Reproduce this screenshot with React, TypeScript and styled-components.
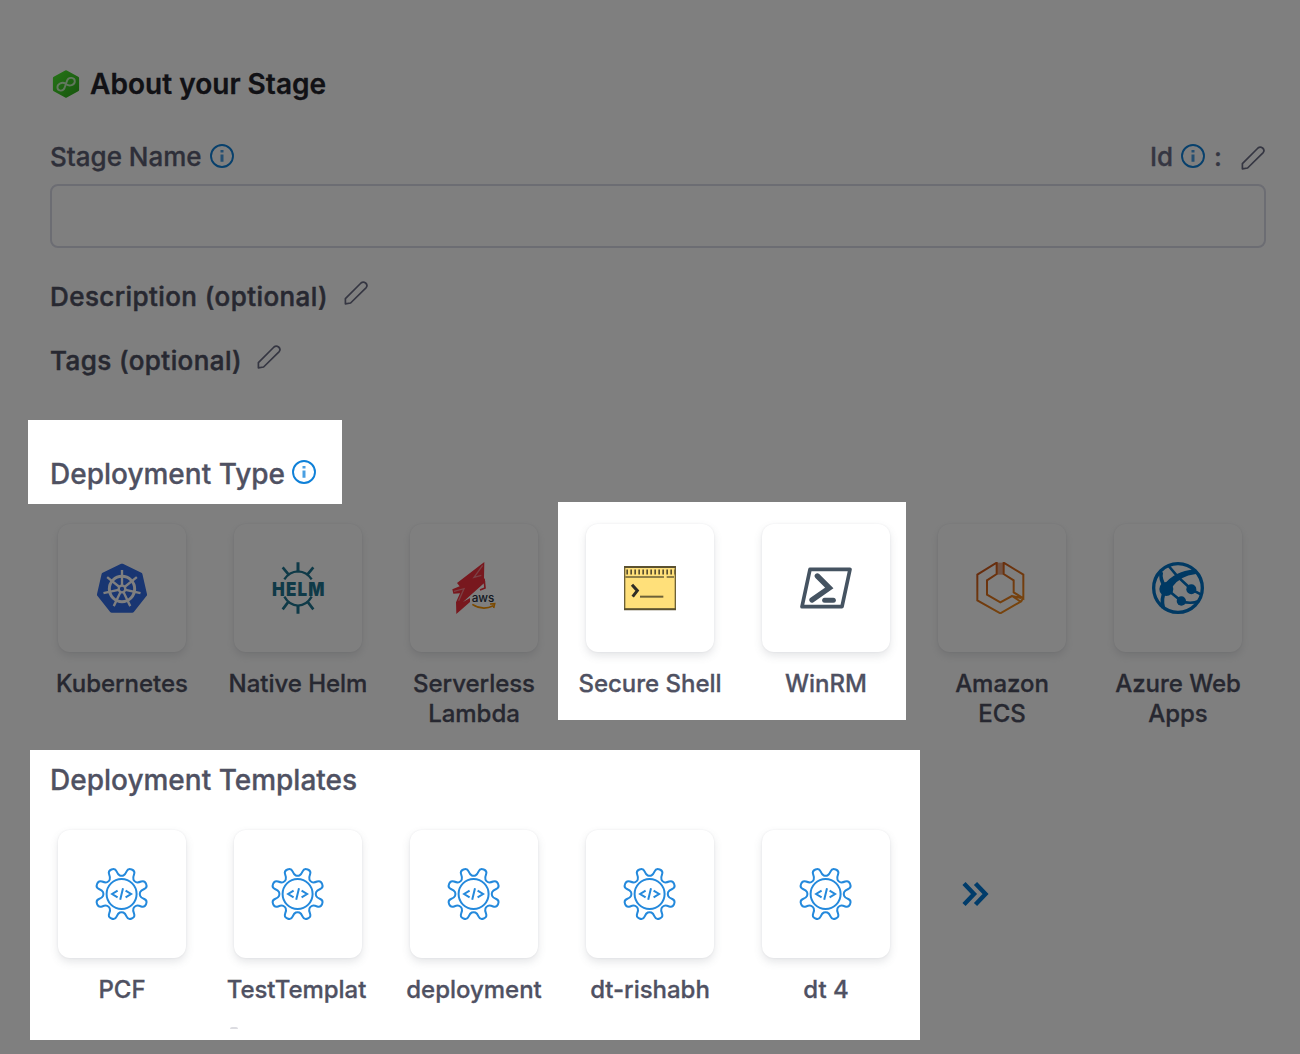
import React from "react";
import styled, { createGlobalStyle } from "styled-components";

const GlobalStyle = createGlobalStyle`
  html, body { margin: 0; padding: 0; background: #fff; }
  * { box-sizing: border-box; }
`;

const Page = styled.main`
  position: relative;
  width: 1300px;
  height: 1054px;
  padding: 64px 34px 0 50px;
  overflow: hidden;
  background: #fff;
  font-family: Inter, "Liberation Sans", sans-serif;
  color: #4f5162;
  -webkit-text-stroke: 0.3px currentColor;
`;

/* Dimming layer with the highlighted regions punched out. */
const Spotlight = styled.div`
  position: absolute;
  inset: 0;
  background: rgba(0, 0, 0, 0.5);
  pointer-events: none;
  clip-path: path(evenodd, "M0 0H1300V1054H0Z M28 420H342V504H28Z M558 502H906V720H558Z M30 750H920V1040H30Z");
`;

const Row = styled.div<{ $gap?: number; $mt?: number; $pl?: number }>`
  display: flex;
  align-items: center;
  height: 40px;
  gap: ${(p) => p.$gap ?? 8}px;
  margin-top: ${(p) => p.$mt ?? 0}px;
  padding-left: ${(p) => p.$pl ?? 0}px;
`;

const Title = styled.h1`
  margin: 0;
  font-size: 28px;
  font-weight: 600;
  letter-spacing: 0.03px;
  line-height: 40px;
  color: #22222a;
  white-space: nowrap;
`;

const Label = styled.span<{ $tone?: string; $size?: number; $spacing?: number }>`
  font-size: ${(p) => p.$size ?? 26}px;
  font-weight: 500;
  letter-spacing: ${(p) => p.$spacing ?? 0}px;
  line-height: 40px;
  color: ${(p) => p.$tone ?? "#4f5162"};
  white-space: nowrap;
`;

/* Optional fields carry a slightly heavier label. */
const StrongLabel = styled(Label)`
  -webkit-text-stroke-width: 0.5px;
`;

const IconSlot = styled.span<{ $lift?: number; $ml?: number; $mr?: number }>`
  display: flex;
  margin: 0 ${(p) => p.$mr ?? 0}px ${(p) => p.$lift ?? 0}px ${(p) => p.$ml ?? 0}px;
`;

const Split = styled.div`
  display: flex;
  justify-content: space-between;
  margin-top: 33px;
`;

const Input = styled.input`
  display: block;
  width: 1216px;
  height: 64px;
  margin-top: 7px;
  border: 2px solid #d9dae6;
  border-radius: 8px;
  background: #fff;
  outline: none;
`;

const Grid = styled.div`
  display: flex;
  margin: 30px 0 0 -16px;
  height: 206px;
`;

const Item = styled.div`
  display: flex;
  flex-direction: column;
  align-items: center;
  width: 176px;
`;

const Card = styled.div`
  display: flex;
  align-items: center;
  justify-content: center;
  width: 128px;
  height: 128px;
  flex: none;
  border-radius: 12px;
  background: #fff;
  box-shadow: 0 4px 8px rgba(96, 97, 112, 0.16), 0 0 2px rgba(40, 41, 61, 0.08);
`;

const Caption = styled.span<{ $clipped?: boolean }>`
  margin-top: 17px;
  margin-right: ${(p) => (p.$clipped ? 3 : 0)}px;
  font-size: 24px;
  font-weight: 500;
  line-height: 30px;
  letter-spacing: -0.03px;
  text-align: center;
  white-space: pre;
  color: #4f5162;
`;

const Remnant = styled.i`
  width: 8px;
  height: 2px;
  margin: 22px 128px 0 0;
  border-radius: 4px 4px 0 0;
  background: #dcdce1;
`;

const More = styled.div`
  display: flex;
  align-items: center;
  height: 128px;
  padding-left: 47px;
`;

const InfoIcon = () => (
  <svg width="24" height="24" viewBox="0 0 24 24">
    <circle cx="12" cy="12" r="11" fill="none" stroke="#0f80d8" strokeWidth="1.9" />
    <path d="M12 6V8.6M12 10.4V17.8" stroke="#4a9fe2" strokeWidth="3" />
  </svg>
);

const PencilIcon = () => (
  <svg width="24" height="24" viewBox="0 0 24 24" fill="none" stroke="#6b6d85" strokeWidth="1.7" strokeLinejoin="round">
    <path d="M1.4 22.8 1.4 17.6 17 2Q19.2.2 21.6 2 24 4.2 22.2 6.6L6.6 22 1.4 22.8Z" />
  </svg>
);

const StageIcon = () => (
  <svg width="28" height="28" viewBox="0 0 28 28">
    <defs>
      <linearGradient id="stage" x1="0" y1="0" x2="1" y2="1">
        <stop offset="0" stopColor="#4be52e" />
        <stop offset="1" stopColor="#2fae1c" />
      </linearGradient>
    </defs>
    <path d="M14 2 25.4 8.2V19.8L14 26 2.6 19.8V8.2Z" fill="url(#stage)" stroke="url(#stage)" strokeWidth="3.4" strokeLinejoin="round" />
    <path
      d="M13.2 13.4C10.4 11.6 5.4 13.6 5.4 17.3 5.4 21.4 11.4 21.8 12.6 17.8L15.2 10.4C16.6 6.6 22.8 7.2 22.8 11.2 22.8 15.2 17.4 16.6 14.6 14.6"
      fill="none" stroke="#fff" strokeOpacity=".7" strokeWidth="1.9"
    />
  </svg>
);

const polar = (cx: number, cy: number, r: number, deg: number) => {
  const a = (deg * Math.PI) / 180;
  return `${(cx + r * Math.sin(a)).toFixed(2)} ${(cy - r * Math.cos(a)).toFixed(2)}`;
};
const seven = Array.from({ length: 7 }, (_, i) => (i * 360) / 7);

const KubernetesIcon = () => (
  <svg width="52" height="52" viewBox="0 0 156 156">
    <path d={`M${seven.map((a) => polar(78, 82, 71, a)).join("L")}Z`} fill="#326ce5" stroke="#326ce5" strokeWidth="12" strokeLinejoin="round" />
    <g fill="none" stroke="#fff">
      <circle cx="78" cy="81" r="38" strokeWidth="9" />
      <path d={seven.map((a) => `M${polar(78, 81, 11, a)}L${polar(78, 81, 57, a)}`).join("")} strokeWidth="7" />
      <circle cx="78" cy="81" r="10" strokeWidth="7" />
    </g>
  </svg>
);

const HelmIcon = () => (
  <svg width="52" height="52" viewBox="0 0 156 156" overflow="visible" fill="none" stroke="#1f7590" strokeWidth="7">
    <path d="M37 52Q52 29 78 28 104 29 119 52M37 104Q52 130 78 131 104 130 119 104" />
    <path d="M78 1V28M78 130V155" strokeWidth="9" />
    <path d="M32 16 50 38M124 16 106 38M32 142 50 118M124 142 106 118" strokeWidth="8" />
    <text x="0" y="101" textLength="161" lengthAdjust="spacingAndGlyphs" letterSpacing="4" fontFamily="Inter, sans-serif" fontWeight="900" fontSize="57" fill="#1f7590" stroke="none">HELM</text>
  </svg>
);

const ServerlessIcon = () => (
  <svg width="52" height="52" viewBox="0 0 156 156">
    <path d="M109 0 27 63 35 73 13 82 16 95 36 94 24 121 25 156 66 120 66 108 45 120 112 60 108 51Z" fill="#f0303c" />
    <path d="M104 10 78 46 100 40M18 88 48 80 32 116" fill="none" stroke="#fff" strokeOpacity=".4" strokeWidth="4" />
    <path d="M108 50 111 78 96 84" fill="none" stroke="#f0303c" strokeWidth="5" />
    <text x="71" y="119" textLength="68" lengthAdjust="spacingAndGlyphs" fontFamily="Inter, sans-serif" fontWeight="500" fontSize="38" fill="#252f3e">aws</text>
    <path d="M73 127Q104 147 136 131M126 126 140 125 137 138" fill="none" stroke="#f79400" strokeWidth="5" />
  </svg>
);

const ShellIcon = () => (
  <svg width="52" height="52" viewBox="0 0 156 156">
    <rect x="2" y="14" width="152" height="128" fill="#ffe07a" stroke="#6d6137" strokeWidth="4" />
    <path d="M0 15H156M0 142H156" stroke="#5b5130" strokeWidth="6" />
    <path d="M7 30H154" stroke="#5b5130" strokeWidth="15" strokeDasharray="5 7" />
    <path d="M4 45H120M128 45H150" stroke="#6d6137" strokeWidth="5" />
    <path d="M24 68 40 86 26 104" fill="none" stroke="#2f2d26" strokeWidth="9" />
    <path d="M48 104H118" stroke="#6d6137" strokeWidth="6" />
  </svg>
);

const PowershellIcon = () => (
  <svg width="52" height="52" viewBox="0 0 156 156" fill="none" stroke="#455361" strokeLinejoin="round" strokeLinecap="round">
    <path d="M30 22H150L126 134H6Z" strokeWidth="11" />
    <path d="M52 42 88 78 36 114" strokeWidth="16" strokeLinejoin="miter" />
    <path d="M74 115H100" strokeWidth="15" />
  </svg>
);

const EcsIcon = () => (
  <svg width="52" height="52" viewBox="0 0 156 156">
    <defs>
      <linearGradient id="ecs" x1="0" y1="0" x2=".6" y2="1">
        <stop offset="0" stopColor="#c8511b" />
        <stop offset="1" stopColor="#f08a1c" />
      </linearGradient>
    </defs>
    <path d="M62 2H83V38H62Z" fill="#c8511b" fillOpacity=".5" />
    <path d="M62 2 4 38V115L73 154 134 119 108 102 73 121 33 98V55L62 36ZM83 2 142 38V109L113 91V55L83 36ZM134 119 142 109M108 102 136 108" fill="none" stroke="url(#ecs)" strokeWidth="6" />
  </svg>
);

const AzureIcon = () => (
  <svg width="52" height="52" viewBox="0 0 156 156" fill="none" stroke="#0072c6">
    <circle cx="78" cy="78" r="73" strokeWidth="10" />
    <path d="M35 70Q65 28 128 22L132 36Q82 42 60 76Z" fill="#0072c6" stroke="none" />
    <circle cx="43" cy="81" r="21" fill="#0072c6" stroke="none" />
    <circle cx="118" cy="82" r="15" fill="#0072c6" stroke="none" />
    <circle cx="88" cy="117" r="14" fill="#0072c6" stroke="none" />
    <path d="M50 12 77 44 118 82 148 98M50 86 88 117Q116 128 142 116" strokeWidth="8" />
    <path d="M42 81Q22 50 28 30M40 84Q26 110 34 138" strokeWidth="11" />
  </svg>
);

const gearOutline = (() => {
  const profile: [number, number][] = [[-12, 19.6], [-8.5, 26.8], [8.5, 26.8], [12, 19.6], [22.5, 17.8]];
  const pts: [number, number][] = [];
  for (let k = 0; k < 8; k++) {
    for (const [da, r] of profile) {
      const a = ((22.5 + 45 * k + da) * Math.PI) / 180;
      pts.push([26 + r * Math.sin(a), 26 - r * Math.cos(a)]);
    }
  }
  const mid = (p: number[], q: number[]) => `${((p[0] + q[0]) / 2).toFixed(2)} ${((p[1] + q[1]) / 2).toFixed(2)}`;
  let d = `M${mid(pts[pts.length - 1], pts[0])}`;
  pts.forEach((p, i) => {
    d += `Q${p[0].toFixed(2)} ${p[1].toFixed(2)} ${mid(p, pts[(i + 1) % pts.length])}`;
  });
  return d + "Z";
})();

const GearIcon = () => (
  <svg width="52" height="52" viewBox="0.4 0 52 52" fill="none" stroke="#2489dc" strokeWidth="2" overflow="visible">
    <path d={gearOutline} />
    <circle cx="26" cy="26" r="15" />
    <path d="M22 22.6 16.5 26 22 29.4M30 22.6 35.5 26 30 29.4M27.4 20.2 24.6 31.8" />
  </svg>
);

const ChevronsIcon = () => (
  <svg width="28" height="26" viewBox="0 0 28 26" fill="none" stroke="#0278d5" strokeWidth="4.4">
    <path d="M3 2.6 13 13 3 23.4M14.5 2.6 24.5 13 14.5 23.4" />
  </svg>
);

const types = [
  { name: "Kubernetes", icon: <KubernetesIcon /> },
  { name: "Native Helm", icon: <HelmIcon /> },
  { name: "Serverless\nLambda", icon: <ServerlessIcon /> },
  { name: "Secure Shell", icon: <ShellIcon /> },
  { name: "WinRM", icon: <PowershellIcon /> },
  { name: "Amazon\nECS", icon: <EcsIcon /> },
  { name: "Azure Web\nApps", icon: <AzureIcon /> },
];

const templates = [
  { name: "PCF" },
  { name: "TestTemplat", clipped: true },
  { name: "deployment" },
  { name: "dt-rishabh" },
  { name: "dt 4" },
];

export default function App() {
  return (
    <Page>
      <GlobalStyle />
      <Row $gap={10} $pl={2}>
        <StageIcon />
        <Title>About your Stage</Title>
      </Row>
      <Split>
        <Row>
          <Label $tone="#5c5e73">Stage Name</Label>
          <IconSlot $lift={2}><InfoIcon /></IconSlot>
        </Row>
        <Row>
          <Label $tone="#6b6d85">Id</Label>
          <IconSlot $lift={2} $mr={1}><InfoIcon /></IconSlot>
          <Label $tone="#6b6d85">:</Label>
          <IconSlot $lift={-2} $ml={11} $mr={1}><PencilIcon /></IconSlot>
        </Row>
      </Split>
      <Input aria-label="Stage Name" />
      <Row $mt={29} $gap={16}>
        <StrongLabel $spacing={0.42}>Description (optional)</StrongLabel>
        <IconSlot $lift={8}><PencilIcon /></IconSlot>
      </Row>
      <Row $mt={24} $gap={15}>
        <StrongLabel $spacing={0.42}>Tags (optional)</StrongLabel>
        <IconSlot $lift={8}><PencilIcon /></IconSlot>
      </Row>
      <Row $mt={73} $gap={7}>
        <Label $size={28}>Deployment Type</Label>
        <IconSlot $lift={4}><InfoIcon /></IconSlot>
      </Row>
      <Grid>
        {types.map((t) => (
          <Item key={t.name}>
            <Card>{t.icon}</Card>
            <Caption>{t.name}</Caption>
          </Item>
        ))}
      </Grid>
      <Row $mt={30}>
        <Label $size={28}>Deployment Templates</Label>
      </Row>
      <Grid>
        {templates.map((t) => (
          <Item key={t.name}>
            <Card><GearIcon /></Card>
            <Caption $clipped={t.clipped}>{t.name}</Caption>
            {t.clipped && <Remnant />}
          </Item>
        ))}
        <More><ChevronsIcon /></More>
      </Grid>
      <Spotlight />
    </Page>
  );
}
